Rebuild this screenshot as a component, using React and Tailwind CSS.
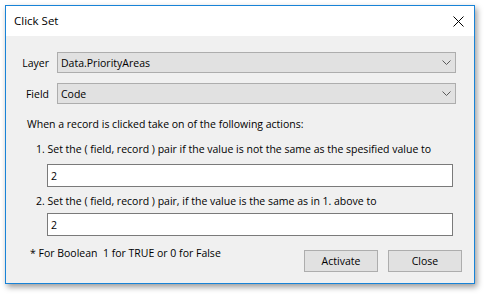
import React from "react";

function Chevron() {
  return (
    <svg width="9" height="5" viewBox="0 0 9 5" className="block">
      <path d="M0.5 0.5 L4.5 4.5 L8.5 0.5" fill="none" stroke="#5a5a5a" strokeWidth="1" />
    </svg>
  );
}

function Select({ value }) {
  return (
    <div className="flex h-[21px] w-[399px] items-center justify-between border border-[#adadad] bg-[#e1e1e1] pl-[3px] pr-[4px]">
      <span>{value}</span>
      <Chevron />
    </div>
  );
}

export default function App() {
  return (
    <div
      className="h-[295px] w-[485px] bg-white pl-[5px] pt-[5px] text-[10.5px] leading-[14px] text-black"
      style={{ fontFamily: '"Open Sans", "Segoe UI", sans-serif' }}
    >
      <div className="flex h-[279px] w-[470px] flex-col border border-[#1883d7] bg-[#f0f0f0] shadow-[2px_3px_6px_rgba(0,0,0,0.4)]">
        <div className="flex h-[30px] items-center justify-between bg-white pl-[8px] pr-[10px]">
          <span className="text-[11.5px]">Click Set</span>
          <svg width="11" height="11" viewBox="0 0 11 11" className="block">
            <path d="M0.5 0.5 L10.5 10.5 M10.5 0.5 L0.5 10.5" stroke="#000" strokeWidth="1" />
          </svg>
        </div>
        <div className="flex flex-col pt-[16px]">
          <div className="flex items-center pl-[14px]">
            <span className="w-[29px] text-right">Layer</span>
            <div className="ml-[8px]"><Select value="Data.PriorityAreas" /></div>
          </div>
          <div className="mt-[10px] flex items-center pl-[14px]">
            <span className="w-[29px] text-right">Field</span>
            <div className="ml-[8px]"><Select value="Code" /></div>
          </div>
          <div className="mt-[13px] pl-[21px]">When a record is clicked take on of the following actions:</div>
          <div className="mt-[11px] pl-[30px]">1. Set the ( field, record ) pair if the value is not the same as the spesified value to</div>
          <div className="ml-[41px] mt-[8px] flex h-[23px] w-[406px] items-center border border-[#7a7a7a] bg-white pl-[3px]">2</div>
          <div className="mt-[7px] pl-[30px]">2. Set the ( field, record ) pair, if the value is the same as in 1. above to</div>
          <div className="ml-[41px] mt-[5px] flex h-[23px] w-[406px] items-center border border-[#7a7a7a] bg-white pl-[3px]">2</div>
          <div className="mt-[10px] flex items-start">
            <span className="ml-[24px]">* For Boolean&nbsp; 1 for TRUE or 0 for False</span>
            <div className="ml-auto mr-[12px] mt-[4px] flex gap-[10px]">
              <div className="flex h-[22px] w-[74px] items-center justify-center border border-[#adadad] bg-[#e1e1e1]">Activate</div>
              <div className="flex h-[22px] w-[74px] items-center justify-center border border-[#adadad] bg-[#e1e1e1]">Close</div>
            </div>
          </div>
        </div>
      </div>
    </div>
  );
}
